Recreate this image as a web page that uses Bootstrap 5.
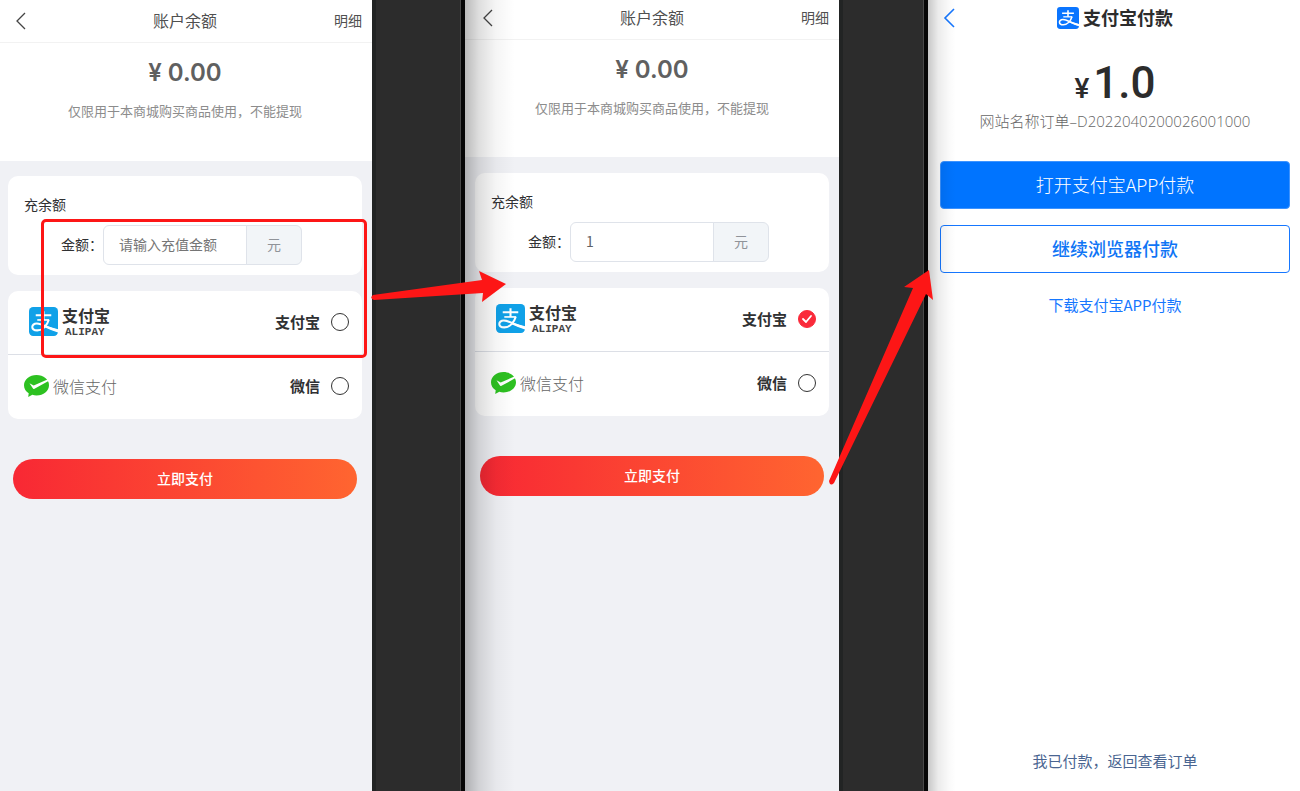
<!DOCTYPE html>
<html lang="zh-CN">
<head>
<meta charset="utf-8">
<meta name="viewport" content="width=device-width, initial-scale=1">
<title>账户余额充值流程</title>
<link href="https://cdn.jsdelivr.net/npm/bootstrap@5.3.0/dist/css/bootstrap.min.css" rel="stylesheet">
<style>
  body { font-family: "Noto Sans CJK SC", sans-serif; font-size: 14px; line-height: 20px; color: #303133; background: #2c2c2c; }
  a { text-decoration: none; color: inherit; }
  .flow-board { display: grid; grid-template-columns: 372fr 93px 374fr 89px 372fr; min-height: 100vh; overflow: hidden; }
  .phone { position: relative; background: #f0f1f5; min-width: 0; }
  .phone-shifted { padding: 0 2px; overflow: hidden; background: linear-gradient(#fff 157px, #f0f1f5 157px); }
  .phone-shifted .screen { margin-top: -3px; }
  .phone-shifted::before, .phone-pay::before { content: ""; position: absolute; z-index: 2; top: 0; bottom: 0; left: 0; pointer-events: none; }
  .phone-shifted::before { width: 50px; background: linear-gradient(90deg, rgba(0,0,0,.27), rgba(0,0,0,.13) 28%, rgba(0,0,0,.04) 62%, rgba(0,0,0,0)); }
  .phone-pay::before { width: 28px; background: linear-gradient(90deg, rgba(0,0,0,.22), rgba(0,0,0,.08) 36%, rgba(0,0,0,.02) 76%, rgba(0,0,0,0)); }
  .phone-first { padding-right: 2px; background: linear-gradient(#fff 161px, #f0f1f5 161px); }
  .gutter { position: relative; z-index: 3; border-left: 4px solid #222424; background: linear-gradient(270deg, #060606 4px, #484848 4px, #484848 5px, #2c2c2c 5px); }
  .gutter svg { position: absolute; overflow: visible; left: -4px; pointer-events: none; }
  .topbar { height: 43px; padding: 0 10px 2px 8px; border-bottom: 1px solid #f2f2f2; margin-right: -2px; }
  .phone-shifted .topbar { margin-left: -2px; padding-left: 10px; }
  .topbar > * { flex: 1 1 0; }
  .topbar svg { margin-left: 4px; }
  .topbar h1 { font-size: 16px; line-height: 24px; font-weight: 400; margin: 0; color: #505050; }
  .detail-link { color: #505050; }
  .balance { height: 118px; padding-top: 14px; }
  .balance-sum { font: 600 24px/32px Inter, sans-serif; color: #606060; margin: 0; }
  .balance-note { font-size: 13px; line-height: 20px; color: #8c8c8c; margin: 12px 0 0; }
  .panel { background: #fff; border-radius: 10px; margin: 16px 8px 0; }
  .panel-charge { height: 99px; padding: 18px 16px 10px; margin-top: 15px; }
  .panel-charge h2 { font-size: 14px; line-height: 20px; font-weight: 400; margin: 0 0 11px; }
  .sum-row { padding-left: 37px; }
  .sum-row label { padding-bottom: 2px; }
  .sum-group { width: 199px; height: 40px; }
  .sum-group .form-control, .sum-group .input-group-text { font-size: 14px; border-color: #dfe3ea; padding-bottom: 8px; }
  .sum-group .form-control { padding: 0 15px 2px; color: #606266; }
  .sum-group .form-control::placeholder { color: #757575; opacity: 1; }
  .sum-group .input-group-text { width: 56px; color: #909399; background: #f2f5f8; }
  .pay-row { height: 64px; padding: 0 13px 2px 16px; font-size: 15px; font-weight: 700; cursor: pointer; }
  .pay-row:first-child { border-bottom: 1px solid #dcdfe6; }
  .pay-row .form-check-input { width: 18px; height: 18px; margin: 0 0 0 11px; border: 1px solid #333; box-shadow: none; }
  .pay-row .form-check-input:checked { border-color: #fa2a3a; background-color: #fa2a3a; background-image: url("data:image/svg+xml,%3csvg xmlns='http://www.w3.org/2000/svg' viewBox='0 0 18 18'%3e%3cpath fill='none' stroke='%23fff' stroke-width='1.8' stroke-linecap='round' stroke-linejoin='round' d='M5 9l3 3 5-6'/%3e%3c/svg%3e"); background-size: 18px; background-position: center; }
  .alipay-mark { margin: 0 4px 0 5px; }
  .alipay-word { font-size: 16px; line-height: 20px; color: #333; }
  .alipay-latin { font: 700 11px/12px "Liberation Mono", monospace; color: #444; padding-left: 3px; margin-top: 1px; }
  .wechat-word { font-size: 16px; font-weight: 300; color: #666; }
  .btn-submit { margin: 40px 13px 0; height: 40px; padding: 0 0 2px; border-radius: 20px; font-size: 14px; font-weight: 500; color: #fff; border: 0; background: linear-gradient(90deg, #f82834, #ff6530); }
  .focus-box { position: absolute; z-index: 3; left: 41px; right: 5px; top: 219px; height: 139px; border: 3px solid #fd1616; border-radius: 5px; pointer-events: none; }
  .phone-pay { background: #fff; padding: 0 10px 0 12px; }
  .pay-title { height: 36px; color: #2c2c2c; }
  .pay-title h1 { font-size: 18px; line-height: 26px; font-weight: 700; margin: 0; padding-bottom: 2px; }
  .pay-back { position: absolute; left: 12px; top: 7px; line-height: 0; }
  .pay-sum { margin: 25px 0 0; line-height: 44px; font-family: Roboto, sans-serif; font-weight: 500; font-size: 44px; color: #2c2c2c; }
  .pay-sum span { font-size: 28px; font-weight: 500; margin-right: 4px; }
  .pay-order { font-size: 15px; line-height: 20px; font-weight: 300; color: #666; margin: 6px 0 30px; white-space: nowrap; }
  .pay-order { margin-top: 0; }
  .pay-order span { font-family: "Open Sans", sans-serif; }
  .btn-pay { height: 48px; padding: 0 0 2px; border-radius: 4px; font-size: 18px; line-height: 26px; border: 1px solid #1677ff; }
  .btn-open { background: #0074ff; color: #fff; font-weight: 300; border-color: #3d93ff; }
  .btn-browser { background: #fff; color: #0f75f5; font-weight: 500; margin-top: 16px; }
  .download-link { color: #1677ff; font-size: 15px; margin-top: 22px; }
  .paid-link { color: #4a6591; font-size: 15px; margin-bottom: 20px; }
</style>
</head>
<body>
<svg class="d-none" xmlns="http://www.w3.org/2000/svg">
  <symbol id="alipay" viewBox="0 0 28 28">
    <rect width="28" height="28" rx="4" fill="currentColor"/>
    <g fill="none" stroke="#fff" stroke-linecap="butt">
      <path stroke-width="2" d="M6.500 8h15M14 4v8.500"/>
      <path stroke-width="1.600" d="M8 12.500h11.500"/>
      <path stroke-width="2" d="M19 12.500C17.500 17.500 13.500 22.600 8 22.600C1.500 22.600 1.800 16 7.500 16C13 16 17.500 20.200 28 23"/>
    </g>
    <path fill="#fff" d="M16 18.200L28 21.500V24.500Q22 22.800 15 19.500z"/>
  </symbol>
  <symbol id="wechat" viewBox="0 0 25 22">
    <path fill="#2dc121" d="M12.500 0C5.500 0 0 4.500 0 10.200c0 3.400 1.900 6.300 4.700 8.100L4.200 22l4.100-2.200c1.300.4 2.700.600 4.200.600C19.500 20.400 25 15.900 25 10.200S19.500 0 12.500 0z"/>
    <path fill="#fff" d="M5.500 8.300l4.200 2.300L24 4.200l.5 1.900L10.500 13.800c-.8.400-1.400.2-1.700-.5z"/>
  </symbol>
</svg>

<main class="flow-board">
  <section class="phone phone-first">
    <div class="screen">
      <header class="topbar d-flex align-items-center">
        <a href="#" aria-label="返回"><svg width="16" height="20" viewBox="0 0 16 20" fill="none" stroke="#444" stroke-width="1.300"><path d="M13 2L5 10l8 8"/></svg></a>
        <h1 class="text-center text-nowrap">账户余额</h1>
        <a href="#" class="detail-link text-end">明细</a>
      </header>
      <div class="balance text-center">
        <p class="balance-sum">¥ 0.00</p>
        <p class="balance-note">仅限用于本商城购买商品使用，不能提现</p>
      </div>
      <form>
        <div class="panel panel-charge">
          <h2>充余额</h2>
          <div class="sum-row d-flex align-items-center">
            <label for="sum1" class="text-nowrap">金额：</label>
            <div class="input-group sum-group flex-nowrap">
              <input id="sum1" type="text" class="form-control" placeholder="请输入充值金额">
              <span class="input-group-text justify-content-center">元</span>
            </div>
          </div>
        </div>
        <div class="panel">
          <label class="pay-row d-flex align-items-center" for="ali1">
            <svg class="alipay-mark" width="29" height="29" color="#10a1e8"><use href="#alipay"/></svg>
            <span class="d-flex flex-column me-auto"><span class="alipay-word">支付宝</span><span class="alipay-latin">ALIPAY</span></span>
            支付宝<input class="form-check-input" type="radio" name="pay1" id="ali1">
          </label>
          <label class="pay-row d-flex align-items-center" for="wx1">
            <svg class="me-1" width="25" height="22"><use href="#wechat"/></svg>
            <span class="wechat-word me-auto">微信支付</span>
            微信<input class="form-check-input" type="radio" name="pay1" id="wx1">
          </label>
        </div>
        <div class="d-grid"><button type="button" class="btn btn-submit">立即支付</button></div>
      </form>
    </div>
    <div class="focus-box"></div>
  </section>

  <div class="gutter">
    <svg style="top:270px" width="136" height="34" fill="#fd1616"><path d="M1 25L110 10 107 1 134 14 110 32 111 23 2 30Q-3 28 1 25z"/></svg>
  </div>

  <section class="phone phone-shifted">
    <div class="screen">
      <header class="topbar d-flex align-items-center">
        <a href="#" aria-label="返回"><svg width="16" height="20" viewBox="0 0 16 20" fill="none" stroke="#444" stroke-width="1.300"><path d="M13 2L5 10l8 8"/></svg></a>
        <h1 class="text-center text-nowrap">账户余额</h1>
        <a href="#" class="detail-link text-end">明细</a>
      </header>
      <div class="balance text-center">
        <p class="balance-sum">¥ 0.00</p>
        <p class="balance-note">仅限用于本商城购买商品使用，不能提现</p>
      </div>
      <form>
        <div class="panel panel-charge">
          <h2>充余额</h2>
          <div class="sum-row d-flex align-items-center">
            <label for="sum2" class="text-nowrap">金额：</label>
            <div class="input-group sum-group flex-nowrap">
              <input id="sum2" type="text" class="form-control" value="1">
              <span class="input-group-text justify-content-center">元</span>
            </div>
          </div>
        </div>
        <div class="panel">
          <label class="pay-row d-flex align-items-center" for="ali2">
            <svg class="alipay-mark" width="29" height="29" color="#10a1e8"><use href="#alipay"/></svg>
            <span class="d-flex flex-column me-auto"><span class="alipay-word">支付宝</span><span class="alipay-latin">ALIPAY</span></span>
            支付宝<input class="form-check-input" type="radio" name="pay2" id="ali2" checked>
          </label>
          <label class="pay-row d-flex align-items-center" for="wx2">
            <svg class="me-1" width="25" height="22"><use href="#wechat"/></svg>
            <span class="wechat-word me-auto">微信支付</span>
            微信<input class="form-check-input" type="radio" name="pay2" id="wx2">
          </label>
        </div>
        <div class="d-grid"><button type="button" class="btn btn-submit">立即支付</button></div>
      </form>
    </div>
  </section>

  <div class="gutter">
    <svg style="top:270px" width="94" height="216" fill="#fd1616"><path d="M-10 211L74 18 65 17 90 0 94 30 87 24 -5 213Q-9 217 -10 211z"/></svg>
  </div>

  <section class="phone phone-pay d-flex flex-column text-center">
    <header class="pay-title d-flex align-items-center justify-content-center">
      <a href="#" class="pay-back" aria-label="返回"><svg width="16" height="22" viewBox="0 0 16 22" fill="none" stroke="#1677ff" stroke-width="1.600"><path d="M14 2L5 11l9 9"/></svg></a>
      <svg class="me-1" width="22" height="22" color="#0a75ff"><use href="#alipay"/></svg>
      <h1>支付宝付款</h1>
    </header>
    <p class="pay-sum"><span>¥</span>1.0</p>
    <p class="pay-order">网站名称订单<span>–D2022040200026001000</span></p>
    <button type="button" class="btn btn-pay btn-open">打开支付宝APP付款</button>
    <button type="button" class="btn btn-pay btn-browser">继续浏览器付款</button>
    <a href="#" class="download-link align-self-center">下载支付宝APP付款</a>
    <a href="#" class="paid-link align-self-center mt-auto">我已付款，返回查看订单</a>
  </section>
</main>
<script src="https://cdn.jsdelivr.net/npm/bootstrap@5.3.0/dist/js/bootstrap.bundle.min.js"></script>
</body>
</html>
